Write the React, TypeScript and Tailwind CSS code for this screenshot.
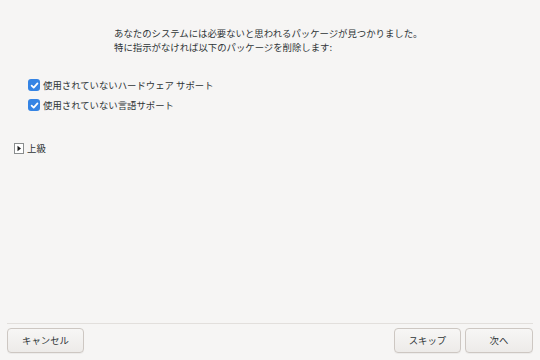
import React from "react";

const font = { fontFamily: '"Noto Sans CJK JP", "Noto Sans", sans-serif' };

function Check({ label }: { label: string }) {
  return (
    <div className="flex items-center h-[20px]">
      <div className="w-[12px] h-[12px] rounded-[3px] bg-[#3584e4] flex items-center justify-center">
        <svg width="9" height="9" viewBox="0 0 10 10">
          <path d="M1.8 5.2 L4.1 7.4 L8.3 2.6" fill="none" stroke="#fff" strokeWidth="1.9" strokeLinecap="round" strokeLinejoin="round" />
        </svg>
      </div>
      <span className="ml-[3px] text-[#2e3436]">{label}</span>
    </div>
  );
}

function Btn({ label, w }: { label: string; w: string }) {
  return (
    <button
      className={`${w} h-[25px] rounded-[4px] border border-[#cdc7c2] bg-gradient-to-b from-[#f7f6f5] to-[#edebe9] text-[#2e3436] text-[9.4px] leading-none flex items-center justify-center shadow-[0_1px_0_rgba(0,0,0,0.04)]`}
      style={font}
    >
      {label}
    </button>
  );
}

export default function App() {
  return (
    <div className="w-[540px] h-[360px] bg-[#f6f5f4] flex flex-col text-[9.4px] leading-[14px] text-[#2e3436]" style={font}>
      <div className="flex-1 flex flex-col">
        <div className="pt-[26px] pl-[114px]">
          <div>あなたのシステムには必要ないと思われるパッケージが見つかりました。</div>
          <div>特に指示がなければ以下のパッケージを削除します:</div>
        </div>
        <div className="pl-[28px] pt-[21px] flex flex-col">
          <Check label="使用されていないハードウェア サポート" />
          <Check label="使用されていない言語サポート" />
        </div>
        <div className="pl-[14px] pt-[26px] flex items-center">
          <div className="w-[10px] h-[11px] border border-[#8b8e8f] bg-white flex items-center justify-center">
            <svg width="6" height="7" viewBox="0 0 6 7">
              <path d="M1.5 0.8 L5 3.5 L1.5 6.2 Z" fill="#1c1c1c" />
            </svg>
          </div>
          <span className="ml-[3px]">上級</span>
        </div>
      </div>
      <div className="mx-[7px] h-px bg-[#e2dfdc]" />
      <div className="flex items-center px-[7px] pt-[4px] pb-[7px]">
        <Btn label="キャンセル" w="w-[77px]" />
        <div className="flex-1" />
        <Btn label="スキップ" w="w-[67px]" />
        <div className="w-[4px]" />
        <Btn label="次へ" w="w-[68px]" />
      </div>
    </div>
  );
}
